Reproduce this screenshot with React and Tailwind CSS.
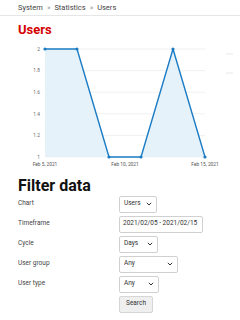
import React from "react";

const Chevron = () => (
  <svg width="6" height="4" viewBox="0 0 6 4" className="shrink-0">
    <path d="M0.8 0.8 L3 3 L5.2 0.8" fill="none" stroke="#333" strokeWidth="1" />
  </svg>
);

function Select({ value, width }) {
  return (
    <div
      className={`flex items-center justify-between h-[17px] border border-[#d0d0d0] rounded-[2px] bg-white pl-[4px] pr-[4px] text-[6.5px] text-[#333] ${width}`}
    >
      <span>{value}</span>
      <Chevron />
    </div>
  );
}

function Row({ label, children }) {
  return (
    <div className="flex items-center h-[20px]">
      <div className="w-[101px] text-[6.5px] text-[#444]">{label}</div>
      {children}
    </div>
  );
}

function Chart() {
  const xs = [45, 77, 109, 141, 173, 205];
  const vals = [2, 2, 1, 1, 2, 1];
  const top = 9;
  const bottom = 117;
  const y = (v) => bottom - (v - 1) * (bottom - top);
  const pts = xs.map((x, i) => [x, y(vals[i])]);
  const line = pts.map((p, i) => `${i ? "L" : "M"}${p[0]},${p[1]}`).join(" ");
  const area = `${line} L205,${bottom} L45,${bottom} Z`;
  const grid = [2, 1.8, 1.6, 1.4, 1.2, 1];
  return (
    <svg width="240" height="130" className="block">
      {grid.map((g) => {
        const gy = bottom - (g - 1) * (bottom - top);
        return (
          <g key={g}>
            <line x1="45" x2="205" y1={gy} y2={gy} stroke="#f1f1f1" strokeWidth="1" />
            <text x="40" y={gy + 1.7} fontSize="4.8" fill="#666" textAnchor="end">
              {g === 2 || g === 1 ? g : g.toFixed(1)}
            </text>
          </g>
        );
      })}
      <line x1="226" x2="233" y1="14" y2="14" stroke="#e8e8e8" strokeWidth="1" />
      <line x1="226" x2="233" y1="33" y2="33" stroke="#e8e8e8" strokeWidth="1" />
      <path d={area} fill="#e5f2fa" />
      <path d={line} fill="none" stroke="#1b7cc4" strokeWidth="1.4" strokeLinejoin="round" />
      {pts.map((p, i) => (
        <circle key={i} cx={p[0]} cy={p[1]} r="1.6" fill="#1b7cc4" />
      ))}
      <text x="45" y="126" fontSize="4.8" fill="#555" textAnchor="middle">Feb 5, 2021</text>
      <text x="125" y="126" fontSize="4.8" fill="#555" textAnchor="middle">Feb 10, 2021</text>
      <text x="205" y="126" fontSize="4.8" fill="#555" textAnchor="middle">Feb 15, 2021</text>
    </svg>
  );
}

export default function App() {
  return (
    <div className="w-[240px] h-[320px] overflow-hidden bg-white font-['Roboto',sans-serif]">
      <div className="h-[16px] border-b border-[#e6e6e6] px-[18px] pt-[2px] text-[7.5px] text-[#444] flex items-start gap-[4px]">
        <span>System</span>
        <span className="text-[#999]">»</span>
        <span>Statistics</span>
        <span className="text-[#999]">»</span>
        <span>Users</span>
      </div>
      <h1 className="px-[18px] pt-[6px] h-[24px] text-[13px] leading-[16px] font-bold text-[#d40000]">Users</h1>
      <Chart />
      <div className="px-[18px]">
        <h2 className="h-[24px] text-[16px] leading-[18px] font-bold text-[#111] pt-[7px]">Filter data</h2>
        <Row label="Chart">
          <Select value="Users" width="w-[38px]" />
        </Row>
        <Row label="Timeframe">
          <div className="h-[17px] w-[84px] border border-[#d0d0d0] rounded-[2px] flex items-center pl-[3px] text-[6.5px] text-[#333]">
            2021/02/05 - 2021/02/15
          </div>
        </Row>
        <Row label="Cycle">
          <Select value="Days" width="w-[39px]" />
        </Row>
        <Row label="User group">
          <Select value="Any" width="w-[59px]" />
        </Row>
        <Row label="User type">
          <Select value="Any" width="w-[40px]" />
        </Row>
        <div className="flex h-[20px] items-center">
          <div className="w-[101px]" />
          <div className="h-[17px] w-[34px] border border-[#d6d6d6] rounded-[2px] bg-[#efefef] flex items-center justify-center text-[6.5px] text-[#333]">
            Search
          </div>
        </div>
      </div>
    </div>
  );
}
